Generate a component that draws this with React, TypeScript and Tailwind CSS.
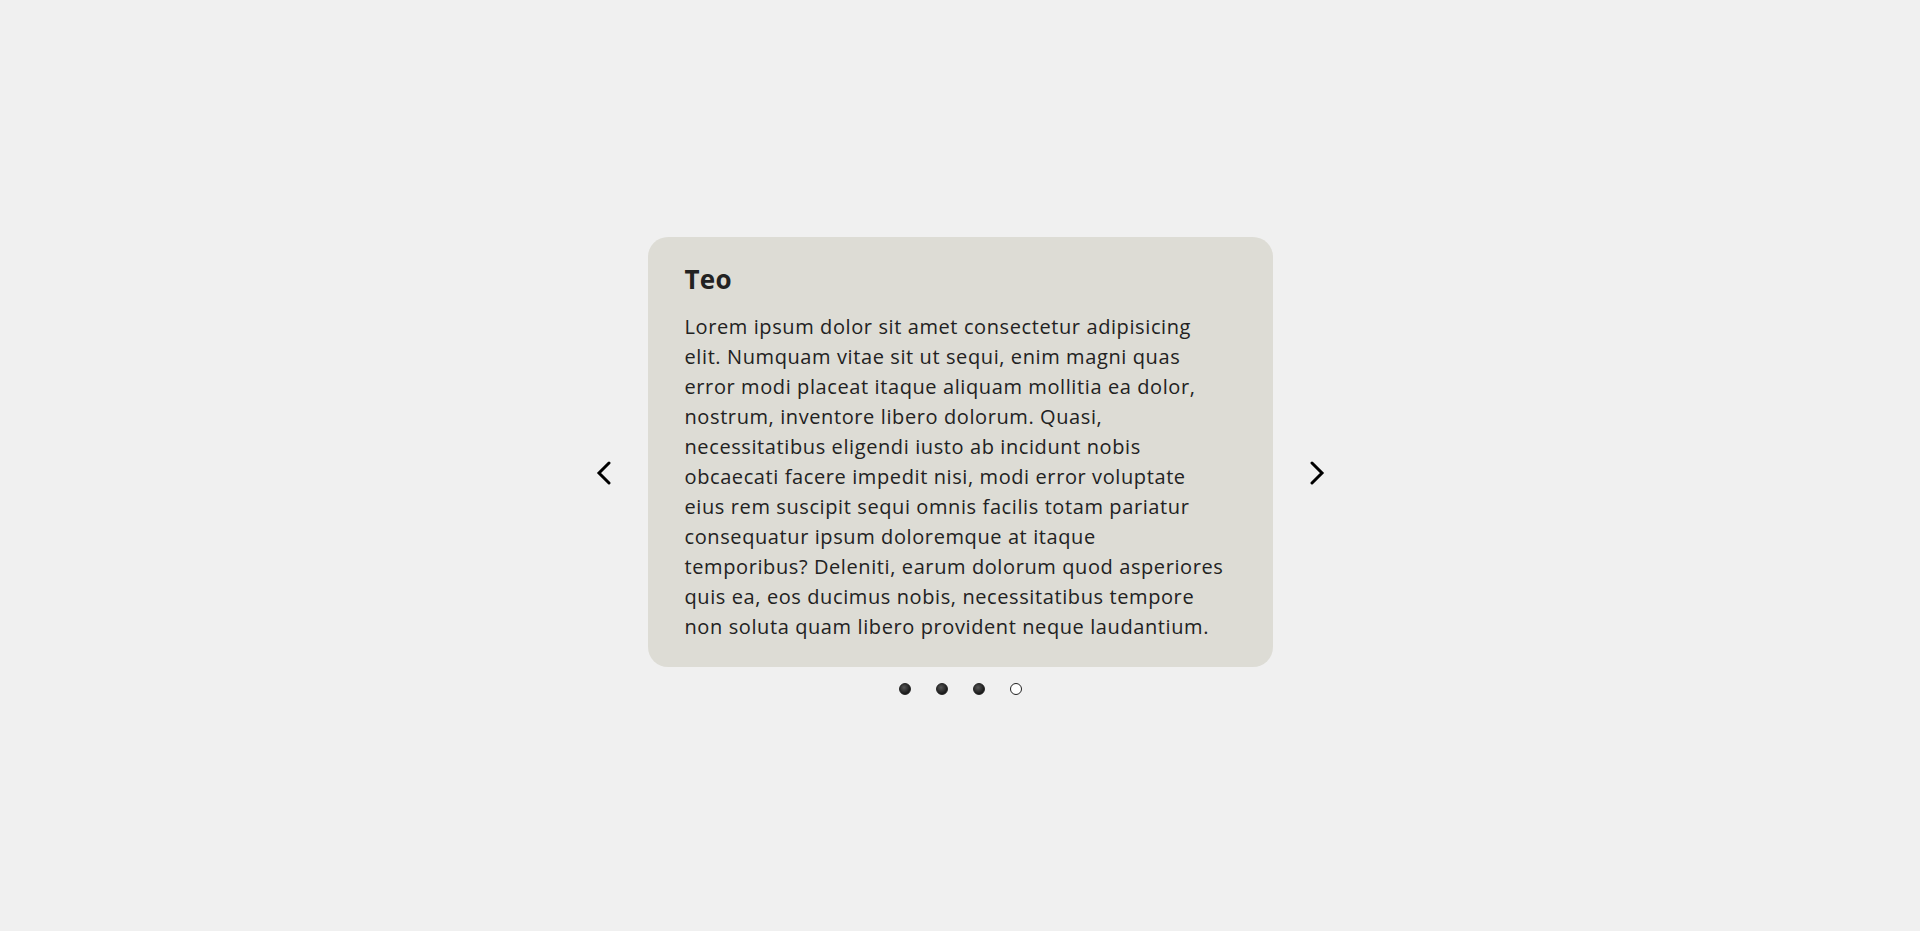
import { useState } from 'react';

const LINES = [
  'Lorem ipsum dolor sit amet consectetur adipisicing',
  'elit. Numquam vitae sit ut sequi, enim magni quas',
  'error modi placeat itaque aliquam mollitia ea dolor,',
  'nostrum, inventore libero dolorum. Quasi,',
  'necessitatibus eligendi iusto ab incidunt nobis',
  'obcaecati facere impedit nisi, modi error voluptate',
  'eius rem suscipit sequi omnis facilis totam pariatur',
  'consequatur ipsum doloremque at itaque',
  'temporibus? Deleniti, earum dolorum quod asperiores',
  'quis ea, eos ducimus nobis, necessitatibus tempore',
  'non soluta quam libero provident neque laudantium.',
];

function Chevron({ dir }: { dir: 'left' | 'right' }) {
  return (
    <svg width="16" height="24" viewBox="0 0 16 24" fill="none">
      <path
        d={dir === 'left' ? 'M13 2 L3 12 L13 22' : 'M3 2 L13 12 L3 22'}
        stroke="#000"
        strokeWidth="3"
        strokeLinecap="round"
        strokeLinejoin="miter"
      />
    </svg>
  );
}

export default function App() {
  const [active, setActive] = useState(3);

  return (
    <div
      className="flex h-[931px] w-full items-center justify-center bg-[#f0f0f0] text-[#222]"
      style={{ fontFamily: '"Open Sans", sans-serif' }}
    >
      <div className="flex items-start gap-[36px]">
        <button className="mt-[224px] flex h-6 w-4 items-center justify-center">
          <Chevron dir="left" />
        </button>

        <div className="flex flex-col items-center gap-4">
          <div className="h-[430px] w-[625px] rounded-[20px] bg-[#dddcd5] px-[37px] pt-[24px]">
            <h2 className="text-[26px] font-bold leading-[36px] tracking-[0.3px]">Teo</h2>
            <p className="mt-[15px] text-[20px] leading-[30px] tracking-[0.6px]">
              {LINES.map((line, i) => (
                <span key={i} className="block whitespace-nowrap">
                  {line}
                </span>
              ))}
            </p>
          </div>

          <div className="flex items-center gap-[25px]">
            {[0, 1, 2, 3].map((i) => (
              <button
                key={i}
                onClick={() => setActive(i)}
                className={
                  i === active
                    ? 'h-3 w-3 rounded-full border border-[#222] bg-white'
                    : 'h-3 w-3 rounded-full border border-[#222] bg-[radial-gradient(circle_at_40%_35%,#555,#1a1a1a_70%)]'
                }
              />
            ))}
          </div>
        </div>

        <button className="mt-[224px] flex h-6 w-4 items-center justify-center">
          <Chevron dir="right" />
        </button>
      </div>
    </div>
  );
}
